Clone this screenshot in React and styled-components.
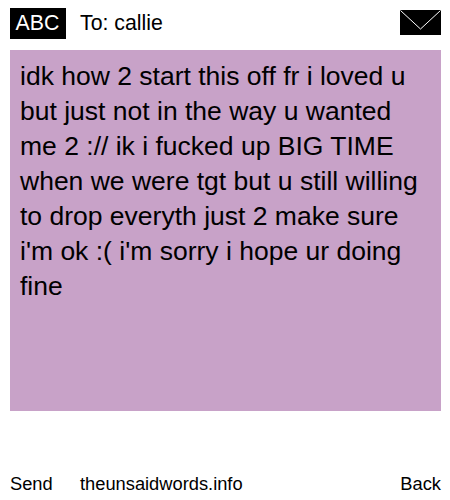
import React from "react";
import styled, { createGlobalStyle } from "styled-components";

const Global = createGlobalStyle`
  html, body { margin: 0; padding: 0; background: #fff; }
  body { font-family: "Liberation Sans", Arial, sans-serif; color: #000; }
`;

const Page = styled.div`
  width: 450px;
  height: 500px;
  padding: 8px 9px 0 10px;
  box-sizing: border-box;
  display: flex;
  flex-direction: column;
  overflow: hidden;
`;

const Header = styled.header`
  height: 31px;
  display: flex;
  align-items: center;
`;

const Mode = styled.div`
  width: 56px;
  height: 31px;
  background: #000;
  color: #fff;
  font-size: 21.3px;
  padding-right: 1px;
  box-sizing: border-box;
  display: flex;
  align-items: center;
  justify-content: center;
`;

const To = styled.div`
  margin-left: 14px;
  font-size: 21.3px;
  flex: 1;
`;

const Envelope = styled.svg`
  width: 41px;
  height: 25px;
  display: block;
  margin-top: -3px;
`;

const Message = styled.div`
  margin-top: 11px;
  height: 361px;
  background: #c8a2c8;
  padding: 9px 10px;
  box-sizing: border-box;
  font-size: 26.5px;
  line-height: 35px;
`;

const Footer = styled.footer`
  margin-top: 62px;
  display: flex;
  font-size: 18.3px;
  line-height: 21px;
`;

const Send = styled.span`
  width: 70px;
`;

const Site = styled.span`
  flex: 1;
`;

export default function App() {
  return (
    <>
      <Global />
      <Page>
        <Header>
          <Mode>ABC</Mode>
          <To>To: callie</To>
          <Envelope viewBox="0 0 41 25" shapeRendering="crispEdges">
            <rect width="41" height="25" fill="#000" />
            <path d="M0.5 0.5 L20.5 19 L40.5 0.5" fill="none" stroke="#fff" strokeWidth="1" shapeRendering="auto" />
          </Envelope>
        </Header>
        <Message>
          idk how 2 start this off fr i loved u but just not in the way u wanted me 2 :// ik i fucked up BIG TIME when we were tgt but u still willing to drop everyth just 2 make sure i'm ok :( i'm sorry i hope ur doing fine
        </Message>
        <Footer>
          <Send>Send</Send>
          <Site>theunsaidwords.info</Site>
          <span>Back</span>
        </Footer>
      </Page>
    </>
  );
}
